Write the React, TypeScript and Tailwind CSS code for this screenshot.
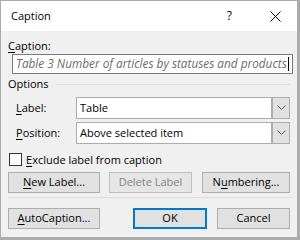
import React from "react";

const font = { fontFamily: '"Open Sans", "Noto Sans", sans-serif' };

function U({ children }: { children: React.ReactNode }) {
  return <span className="underline underline-offset-2 decoration-1">{children}</span>;
}

function Chevron() {
  return (
    <svg width="9" height="6" viewBox="0 0 9 6">
      <path d="M0.5 0.5 L4.5 4.5 L8.5 0.5" fill="none" stroke="#606060" strokeWidth="1" />
    </svg>
  );
}

function Select({ value, h }: { value: string; h: string }) {
  return (
    <div className={`flex ${h} w-[221px] border border-[#adadad] bg-white`}>
      <div className="flex flex-1 items-center pl-[3px] text-[11px] text-black">{value}</div>
      <div className="flex w-[18px] items-center justify-center border-l-2 border-[#adadad] bg-[#e1e1e1]">
        <Chevron />
      </div>
    </div>
  );
}

function Btn({ children, w, disabled, def }: { children: React.ReactNode; w: string; disabled?: boolean; def?: boolean }) {
  const cls = def
    ? "border-2 border-[#0078d7] bg-[#e1e1e1] text-black"
    : disabled
    ? "border border-[#bfbfbf] bg-[#e6e6e6] text-[#838383]"
    : "border border-[#adadad] bg-[#e1e1e1] text-black";
  return (
    <div className={`flex h-[21px] ${w} items-center justify-center text-[11px] ${cls}`}>{children}</div>
  );
}

export default function App() {
  return (
    <div className="h-[240px] w-[300px] bg-[#acacac] pl-px pt-px" style={font}>
      <div className="flex h-[236px] w-[296px] flex-col bg-[#f0f0f0]">
        <div className="flex h-[30px] items-center bg-white pl-[10px]">
          <span className="text-[11px] text-black">Caption</span>
          <span className="ml-auto mr-[38px] text-[12px] text-black">?</span>
          <svg width="11" height="11" viewBox="0 0 11 11" className="mr-[16px]">
            <path d="M0.5 0.5 L10.5 10.5 M10.5 0.5 L0.5 10.5" stroke="#000" strokeWidth="1" />
          </svg>
        </div>
        <div className="flex flex-col px-[7px]">
          <div className="mt-[7px] h-[16px] text-[11px] leading-[16px] text-black">
            <U>C</U>aption:
          </div>
          <div className="ml-[4px] flex h-[20px] w-[281px] items-center overflow-hidden whitespace-nowrap border border-[#7a7a7a] bg-white pl-[3px] text-[11.8px] italic text-[#6d6d6d]">
            Table 3 Number of articles by statuses and products
            <span className="ml-px inline-block h-[14px] w-px shrink-0 bg-black" />
          </div>
          <div className="mt-[2px] flex h-[16px] items-center">
            <span className="text-[11px] leading-[16px] text-black">Options</span>
            <div className="ml-[7px] h-px flex-1 bg-[#dcdcdc]" />
          </div>
          <div className="ml-[8px] mt-[5px] flex flex-col gap-[3px]">
            <div className="flex items-center">
              <span className="w-[62px] text-[11px] text-black">
                <U>L</U>abel:
              </span>
              <Select value="Table" h="h-[22px]" />
            </div>
            <div className="flex items-center">
              <span className="w-[62px] text-[11px] text-black">
                <U>P</U>osition:
              </span>
              <Select value="Above selected item" h="h-[22px]" />
            </div>
          </div>
          <div className="mt-[9px] flex items-center">
            <div className="ml-px h-[13px] w-[13px] border border-[#333] bg-white" />
            <span className="ml-[4px] text-[11px] leading-[13px] text-black">
              <U>E</U>xclude label from caption
            </span>
          </div>
          <div className="mt-[6px] flex">
            <Btn w="w-[92px]">
              <U>N</U>ew Label...
            </Btn>
            <div className="ml-[9px]">
              <Btn w="w-[83px]" disabled>
                Delete Label
              </Btn>
            </div>
            <div className="ml-[10px]">
              <Btn w="w-[88px]">
                N<U>u</U>mbering...
              </Btn>
            </div>
          </div>
          <div className="mt-[4px] h-px w-[284px] bg-[#dcdcdc]" />
          <div className="mt-[10px] flex">
            <Btn w="w-[92px]">
              <U>A</U>utoCaption...
            </Btn>
            <div className="ml-[33px]">
              <Btn w="w-[74px]" def>
                OK
              </Btn>
            </div>
            <div className="ml-[10px]">
              <Btn w="w-[73px]">Cancel</Btn>
            </div>
          </div>
        </div>
      </div>
    </div>
  );
}
